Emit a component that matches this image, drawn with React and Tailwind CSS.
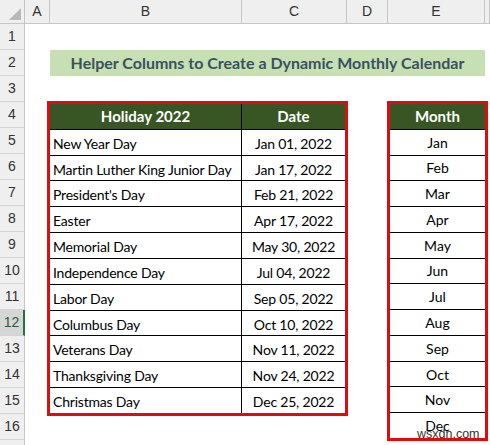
const holidays = [
  ['New Year Day', 'Jan 01, 2022'],
  ['Martin Luther King Junior Day', 'Jan 17, 2022'],
  ["President's Day", 'Feb 21, 2022'],
  ['Easter', 'Apr 17, 2022'],
  ['Memorial Day', 'May 30, 2022'],
  ['Independence Day', 'Jul 04, 2022'],
  ['Labor Day', 'Sep 05, 2022'],
  ['Columbus Day', 'Oct 10, 2022'],
  ['Veterans Day', 'Nov 11, 2022'],
  ['Thanksgiving Day', 'Nov 24, 2022'],
  ['Christmas Day', 'Dec 25, 2022'],
];

const months = ['Jan', 'Feb', 'Mar', 'Apr', 'May', 'Jun', 'Jul', 'Aug', 'Sep', 'Oct', 'Nov', 'Dec'];

const letters = ['A', 'B', 'C', 'D', 'E', ''];

const App = () => {
  return (
    <div className="relative w-[490px] h-[445px] overflow-hidden bg-white font-['Lato','Open_Sans',sans-serif]">
      <div className="grid grid-cols-[25px_25px_192px_105px_41px_97px_5px] grid-rows-[24px_repeat(17,26px)]">
        {/* corner */}
        <div className="col-start-1 row-start-1 bg-[#efefef] border-r border-b border-[#c6c6c6] flex items-end justify-end pr-[3px] pb-[3px]">
          <svg width="12" height="12" viewBox="0 0 12 12">
            <polygon points="12,0 12,12 0,12" fill="#b8b8b8" />
          </svg>
        </div>

        {/* column headers */}
        {letters.map((l, i) => (
          <div
            key={i}
            className="row-start-1 bg-[#efefef] border-r border-b border-[#c6c6c6] flex items-center justify-center text-[14px] text-[#333] font-['Liberation_Sans',sans-serif]"
            style={{ gridColumnStart: i + 2 }}
          >
            {l}
          </div>
        ))}

        {/* row headers */}
        {Array.from({ length: 17 }, (_, i) => (
          <div
            key={i}
            className={`col-start-1 border-b border-[#d4d4d4] flex items-center justify-center text-[14px] font-['Liberation_Sans',sans-serif] ${
              i === 11 ? 'bg-[#d6d6d6] text-[#1e5e3a] border-r-2 border-r-[#217346]' : 'bg-[#efefef] text-[#333] border-r border-r-[#c6c6c6]'
            }`}
            style={{ gridRowStart: i + 2 }}
          >
            {i < 16 ? i + 1 : ''}
          </div>
        ))}

        {/* title */}
        <div className="col-start-3 col-span-4 row-start-3 bg-[#c6e0b4] flex items-center justify-center text-[16px] font-bold text-[#3e4f5f] whitespace-nowrap">
          Helper Columns to Create a Dynamic Monthly Calendar
        </div>

        {/* holiday table */}
        <div className="col-start-3 col-span-2 row-start-5 row-span-12 -ml-[3px] -mt-[1px] -mr-[1px] -mb-[2px] border-[3px] border-[#e00b0b] flex flex-col">
          <div className="flex-1 grid grid-cols-[192px_1fr] bg-[#375623] text-white font-bold text-[15px]">
            <div className="flex items-center justify-center border-r border-black">Holiday 2022</div>
            <div className="flex items-center justify-center">Date</div>
          </div>
          {holidays.map(([name, date]) => (
            <div key={name} className="flex-1 grid grid-cols-[192px_1fr] border-t border-black text-[14px] tracking-[-0.2px] text-black whitespace-nowrap">
              <div className="flex items-center pl-[3px] pt-[2px] border-r border-black">{name}</div>
              <div className="flex items-center justify-center pt-[2px]">{date}</div>
            </div>
          ))}
        </div>

        {/* month table */}
        <div className="col-start-6 row-start-5 row-span-13 -ml-[1px] -mt-[1px] -mr-[3px] -mb-[1px] border-[3px] border-[#e00b0b] flex flex-col">
          <div className="flex-1 flex items-center justify-center bg-[#375623] text-white font-bold text-[15px]">Month</div>
          {months.map((m) => (
            <div key={m} className="flex-1 flex items-center justify-center border-t border-black text-[14px] text-black">
              {m}
            </div>
          ))}
        </div>
      </div>

      <div className="absolute left-[417px] top-[425px] text-[12.5px] text-[#333] font-['Liberation_Sans',sans-serif]">wsxdn.com</div>
    </div>
  );
};

export default App;
